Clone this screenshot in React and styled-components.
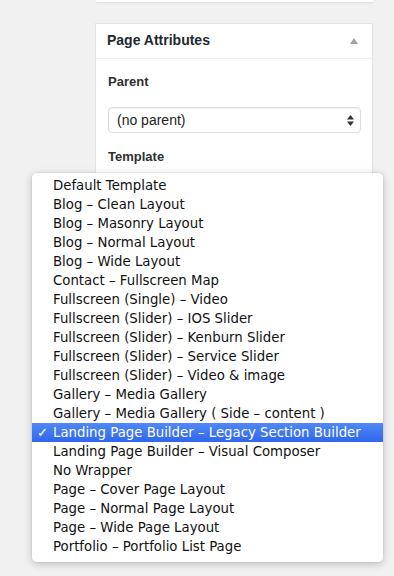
import React from "react";
import styled, { createGlobalStyle } from "styled-components";

const Global = createGlobalStyle`
  html, body { margin: 0; padding: 0; background: #f1f1f1; }
  body { font-family: "Liberation Sans", Arial, sans-serif; }
`;

const Page = styled.div`
  position: relative;
  width: 394px;
  height: 576px;
  overflow: hidden;
  background: #f1f1f1;
`;

const TopBox = styled.div`
  margin-left: 96px;
  width: 277px;
  height: 2px;
  background: #fff;
  border-bottom: 1px solid #e2e2e2;
  box-shadow: 0 1px 2px rgba(0, 0, 0, 0.04);
`;

const Panel = styled.section`
  margin: 20px 0 0 95px;
  width: 276px;
  height: 480px;
  background: #fff;
  border: 1px solid #e3e3e3;
  box-shadow: 0 1px 1px rgba(0, 0, 0, 0.04);
`;

const PanelHeader = styled.div`
  height: 35px;
  box-sizing: border-box;
  padding: 0 14px 2px 11px;
  display: flex;
  align-items: center;
  justify-content: space-between;
  border-bottom: 1px solid #eee;
  font-size: 14px;
  font-weight: bold;
  color: #23282d;
`;

const Toggle = styled.svg`
  width: 8px;
  height: 6px;
  margin-top: 1px;
`;

const PanelBody = styled.div`
  padding: 15px 11px 0 12px;
  display: flex;
  flex-direction: column;
`;

const Label = styled.div`
  font-size: 13px;
  font-weight: bold;
  color: #2f2f2f;
  line-height: 16px;
  margin-bottom: ${(p) => p.$mb || 0}px;
`;

const Select = styled.div`
  width: 253px;
  height: 26px;
  box-sizing: border-box;
  border: 1px solid #ddd;
  border-radius: 4px;
  box-shadow: inset 0 1px 2px rgba(0, 0, 0, 0.06);
  display: flex;
  align-items: center;
  justify-content: space-between;
  padding: 0 6px 0 8px;
  font-size: 14px;
  color: #222;
  margin-bottom: 16px;
`;

const Arrows = styled.svg`
  width: 7px;
  height: 11px;
`;

const Menu = styled.ul`
  position: absolute;
  left: 32px;
  top: 173px;
  width: 351px;
  height: 389px;
  box-sizing: border-box;
  margin: 0;
  padding: 3px 0 0;
  list-style: none;
  background: rgba(255, 255, 255, 0.98);
  border-radius: 5px;
  box-shadow: 0 2px 9px rgba(0, 0, 0, 0.22), 0 0 0 1px rgba(0, 0, 0, 0.04);
  font-family: "DejaVu Sans", "Lucida Grande", sans-serif;
  font-size: 13.3px;
`;

const Item = styled.li`
  position: relative;
  height: 19px;
  line-height: 19px;
  padding-left: 21px;
  color: ${(p) => (p.$selected ? "#fff" : "#111")};
  background: ${(p) =>
    p.$selected ? "linear-gradient(#5088f6, #2f66ec)" : "transparent"};
  white-space: nowrap;
`;

const Check = styled.span`
  position: absolute;
  left: 5px;
  top: 0;
`;

const items = [
  "Default Template",
  "Blog – Clean Layout",
  "Blog – Masonry Layout",
  "Blog – Normal Layout",
  "Blog – Wide Layout",
  "Contact – Fullscreen Map",
  "Fullscreen (Single) – Video",
  "Fullscreen (Slider) – IOS Slider",
  "Fullscreen (Slider) – Kenburn Slider",
  "Fullscreen (Slider) – Service Slider",
  "Fullscreen (Slider) – Video & image",
  "Gallery – Media Gallery",
  "Gallery – Media Gallery ( Side – content )",
  "Landing Page Builder – Legacy Section Builder",
  "Landing Page Builder – Visual Composer",
  "No Wrapper",
  "Page – Cover Page Layout",
  "Page – Normal Page Layout",
  "Page – Wide Page Layout",
  "Portfolio – Portfolio List Page",
];

export default function App() {
  return (
    <Page>
      <Global />
      <TopBox />
      <Panel>
        <PanelHeader>
          <span>Page Attributes</span>
          <Toggle viewBox="0 0 8 6">
            <path d="M4 0 L8 6 L0 6 Z" fill="#a0a0a0" />
          </Toggle>
        </PanelHeader>
        <PanelBody>
          <Label $mb={17}>Parent</Label>
          <Select>
            <span>(no parent)</span>
            <Arrows viewBox="0 0 7 11">
              <path d="M3.5 0 L7 4.5 L0 4.5 Z M3.5 11 L7 6.5 L0 6.5 Z" fill="#333" />
            </Arrows>
          </Select>
          <Label>Template</Label>
        </PanelBody>
      </Panel>
      <Menu>
        {items.map((t, i) => (
          <Item key={t} $selected={i === 13}>
            {i === 13 && <Check>✓</Check>}
            {t}
          </Item>
        ))}
      </Menu>
    </Page>
  );
}
